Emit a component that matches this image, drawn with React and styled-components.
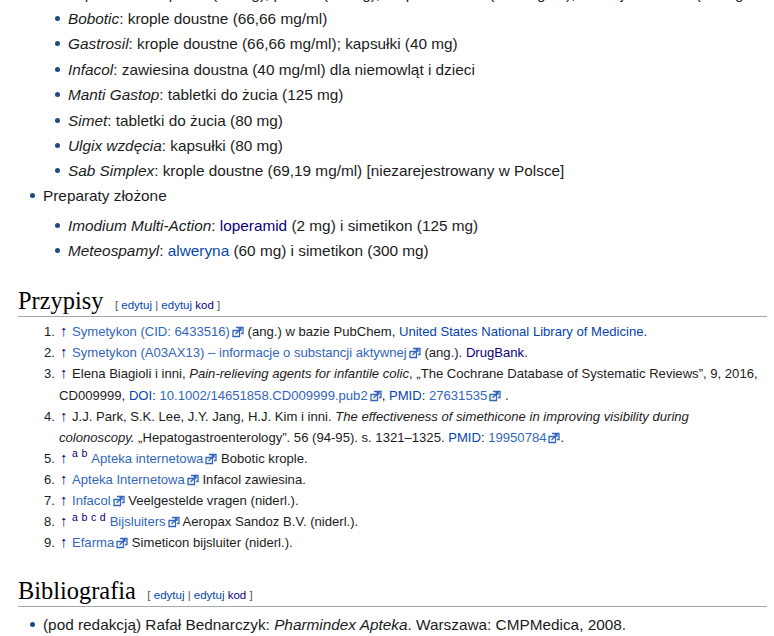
import React from 'react'
import styled, { createGlobalStyle } from 'styled-components'

const GlobalStyle = createGlobalStyle`
  html, body {
    margin: 0;
    padding: 0;
    background: #fff;
    overflow: hidden;
    height: 636px;
  }
  body {
    font-family: "Liberation Sans", Arial, sans-serif;
    color: #1c1c1c;
  }
`

const Page = styled('div')`
  padding: 0 7px 0 18px;
  margin-top: -19.5px;
`

const BulletList = styled('ul')`
  list-style: none;
  margin: ${({ $top }) => $top || 0}px 0 0;
  padding: 0;
`

const NestedList = styled(BulletList)`
  padding-left: 25px;
  margin-bottom: ${({ $bottom }) => $bottom || 0}px;
`

const Item = styled('li')`
  position: relative;
  padding-left: 25px;
  font-size: 15.35px;
  line-height: 25.4px;
  white-space: nowrap;

  &::before {
    content: '';
    position: absolute;
    left: 12px;
    top: 10px;
    width: 5px;
    height: 5px;
    border-radius: 50%;
    background: #1f4a85;
  }
`

const Heading = styled('h2')`
  display: flex;
  align-items: baseline;
  margin: ${({ $top }) => $top}px 0 0;
  height: 29px;
  border-bottom: 1px solid #a2a9b1;
  font-family: "Liberation Serif", Georgia, serif;
  font-weight: 400;
  font-size: 24.4px;
  line-height: 27px;
  color: #000;
`

const EditLinks = styled('span')`
  margin-left: 11.5px;
  font-family: "Liberation Sans", Arial, sans-serif;
  font-size: 11.5px;
  color: #54595d;
`

const RefList = styled('ol')`
  list-style: none;
  margin: 3.8px 0 0;
  padding: 0;
`

const RefItem = styled('li')`
  display: flex;
  font-size: 13.1px;
  line-height: 21.1px;
`

const RefNum = styled('span')`
  flex: 0 0 41px;
  box-sizing: border-box;
  padding-right: 4px;
  text-align: right;
`

const RefBody = styled('span')`
  flex: 1;
  padding-right: 4px;
`

const Link = styled('span')`
  color: ${({ $visited }) => ($visited ? '#0b0080' : '#0645ad')};
`

const ExtLink = styled('span')`
  color: #3366bb;
`

const Up = styled('span')`
  display: inline-block;
  width: 13px;
  padding-left: 1px;
  box-sizing: border-box;
  font-size: 15px;
  line-height: 1;
  color: #0b0080;
`

const Sup = styled('sup')`
  font-size: 10.5px;
  line-height: 0;
  word-spacing: 0.7px;
  color: #0b0080;
  margin-right: 4px;
`

const Ext = styled('svg')`
  width: 12px;
  height: 12px;
  margin-left: 2px;
  vertical-align: -2px;
`

const ExtIcon = () => (
  <Ext viewBox="0 0 12 12" fill="none" stroke="#3366bb" strokeWidth="1.3">
    <path d="M1 4.5h6.5v6H1z" />
    <path d="M4 1.5h7v6H9" />
    <path d="M3.5 8 9 2.5M6.5 2.5H9V5" />
  </Ext>
)

const drugs = [
  ['Bobotic', ': krople doustne (66,66 mg/ml)'],
  ['Gastrosil', ': krople doustne (66,66 mg/ml); kapsułki (40 mg)'],
  ['Infacol', ': zawiesina doustna (40 mg/ml) dla niemowląt i dzieci'],
  ['Manti Gastop', ': tabletki do żucia (125 mg)'],
  ['Simet', ': tabletki do żucia (80 mg)'],
  ['Ulgix wzdęcia', ': kapsułki (80 mg)'],
  ['Sab Simplex', ': krople doustne (69,19 mg/ml) [niezarejestrowany w Polsce]'],
]

const Edit = () => (
  <EditLinks>
    [ <Link>edytuj</Link> | <Link>edytuj</Link> <Link $visited>kod</Link> ]
  </EditLinks>
)

const Ref = ({ n, children }) => (
  <RefItem>
    <RefNum>{n}.</RefNum>
    <RefBody>
      <Up>↑</Up>
      {children}
    </RefBody>
  </RefItem>
)

export default function App() {
  return (
    <Page>
      <GlobalStyle />
      <BulletList>
        <NestedList $bottom={-1}>
          <Item>
            <i>Espumisan</i>: kapsułki (40 mg); perełki (40 mg); krople doustne (100 mg/ml); emulsja doustna (40 mg/5 ml)
          </Item>
          {drugs.map(([name, rest]) => (
            <Item key={name}>
              <i>{name}</i>
              {rest}
            </Item>
          ))}
        </NestedList>
        <Item>Preparaty złożone</Item>
        <NestedList $top={4.5}>
          <Item>
            <i>Imodium Multi-Action</i>: <Link $visited>loperamid</Link> (2 mg) i simetikon (125 mg)
          </Item>
          <Item>
            <i>Meteospamyl</i>: <Link>alweryna</Link> (60 mg) i simetikon (300 mg)
          </Item>
        </NestedList>
      </BulletList>
      <Heading $top={24}>
        Przypisy
        <Edit />
      </Heading>
      <RefList>
        <Ref n={1}>
          <ExtLink>Symetykon (CID: 6433516)</ExtLink>
          <ExtIcon /> (ang.) w bazie PubChem, <Link>United States National Library of Medicine</Link>.
        </Ref>
        <Ref n={2}>
          <ExtLink>Symetykon (A03AX13) – informacje o substancji aktywnej</ExtLink>
          <ExtIcon /> (ang.). <Link $visited>DrugBank</Link>.
        </Ref>
        <Ref n={3}>
          Elena Biagioli i inni, <i>Pain-relieving agents for infantile colic</i>, „The Cochrane Database of Systematic Reviews”, 9, 2016, CD009999, <Link>DOI</Link>: <ExtLink>10.1002/14651858.CD009999.pub2</ExtLink>
          <ExtIcon />, <Link>PMID</Link>: <ExtLink>27631535</ExtLink>
          <ExtIcon /> .
        </Ref>
        <Ref n={4}>
          J.J. Park, S.K. Lee, J.Y. Jang, H.J. Kim i inni. <i>The effectiveness of simethicone in improving visibility during colonoscopy.</i> „Hepatogastroenterology”. 56 (94-95). s. 1321–1325. <Link>PMID</Link>: <ExtLink>19950784</ExtLink>
          <ExtIcon />.
        </Ref>
        <Ref n={5}>
          <Sup>a b</Sup>
          <ExtLink>Apteka internetowa</ExtLink>
          <ExtIcon /> Bobotic krople.
        </Ref>
        <Ref n={6}>
          <ExtLink>Apteka Internetowa</ExtLink>
          <ExtIcon /> Infacol zawiesina.
        </Ref>
        <Ref n={7}>
          <ExtLink>Infacol</ExtLink>
          <ExtIcon /> Veelgestelde vragen (niderl.).
        </Ref>
        <Ref n={8}>
          <Sup>a b c d</Sup>
          <ExtLink>Bijsluiters</ExtLink>
          <ExtIcon /> Aeropax Sandoz B.V. (niderl.).
        </Ref>
        <Ref n={9}>
          <ExtLink>Efarma</ExtLink>
          <ExtIcon /> Simeticon bijsluiter (niderl.).
        </Ref>
      </RefList>
      <Heading $top={23.5}>
        Bibliografia
        <Edit />
      </Heading>
      <BulletList $top={5}>
        <Item>
          (pod redakcją) Rafał Bednarczyk: <i>Pharmindex Apteka</i>. Warszawa: CMPMedica, 2008.
        </Item>
      </BulletList>
    </Page>
  )
}
